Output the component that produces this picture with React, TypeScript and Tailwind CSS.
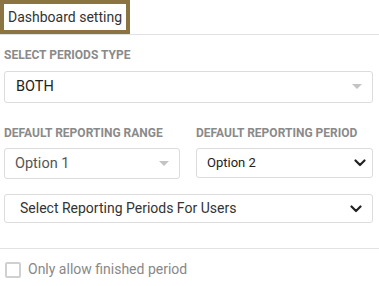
import React from "react"

const Caret: React.FC = () => (
  <svg width="10" height="6" viewBox="0 0 10 6" className="shrink-0">
    <path d="M0 0 L10 0 L5 5 Z" fill="#c4c4c4" />
  </svg>
)

const Chevron: React.FC = () => (
  <svg width="12" height="8" viewBox="0 0 12 8" className="shrink-0">
    <path d="M1.5 1.5 L6 6 L10.5 1.5" fill="none" stroke="#222" strokeWidth="2.2" strokeLinecap="round" strokeLinejoin="round" />
  </svg>
)

const Label: React.FC<{ children: React.ReactNode }> = ({ children }) => (
  <div className="text-[12px] font-bold text-[#8a8a8a] uppercase leading-none">{children}</div>
)

const App: React.FC = () => {
  return (
    <div className="w-[379px] h-[286px] bg-white font-['Roboto',sans-serif] overflow-hidden">
      {/* header */}
      <div className="border-b border-[#e2e2e2] h-[35px]">
        <div className="inline-flex items-center h-[34px] border-4 border-[#8b7442] px-[4px] text-[14px] text-[#333]">
          Dashboard setting
        </div>
      </div>

      <div className="px-[4px] pt-[14px]">
        <Label>Select periods type</Label>
        <div className="mt-[10px] w-[369px] h-[32px] border border-[#dcdcdc] rounded-[3px] flex items-center justify-between pl-[11px] pr-[10px]">
          <span className="text-[14.5px] text-[#222]">BOTH</span>
          <Caret />
        </div>

        <div className="flex gap-[16px] mt-[24px]">
          <div className="w-[176px]">
            <Label>Default reporting range</Label>
            <div className="mt-[9px] h-[31px] border border-[#dcdcdc] rounded-[3px] flex items-center justify-between pl-[10px] pr-[10px]">
              <span className="text-[14.5px] text-[#555]">Option 1</span>
              <Caret />
            </div>
          </div>
          <div className="w-[177px]">
            <Label>Default reporting period</Label>
            <div className="mt-[9px] h-[30px] border border-[#dcdcdc] rounded-[3px] flex items-center justify-between pl-[10px] pr-[6px]">
              <span className="text-[13px] text-[#222]">Option 2</span>
              <Chevron />
            </div>
          </div>
        </div>

        <div className="mt-[15px] w-[369px] h-[29px] border border-[#dcdcdc] rounded-[3px] flex items-center justify-between pl-[15px] pr-[10px]">
          <span className="text-[14px] text-[#333]">Select Reporting Periods For Users</span>
          <Chevron />
        </div>
      </div>

      <div className="mt-[25px] border-t border-[#e2e2e2]" />

      <div className="flex items-center gap-[7px] pl-[5px] pt-[10px]">
        <div className="w-[16px] h-[16px] border-2 border-[#d0d0d0] rounded-[2px]" />
        <span className="text-[14px] text-[#888]">Only allow finished period</span>
      </div>
    </div>
  )
}

export default App
